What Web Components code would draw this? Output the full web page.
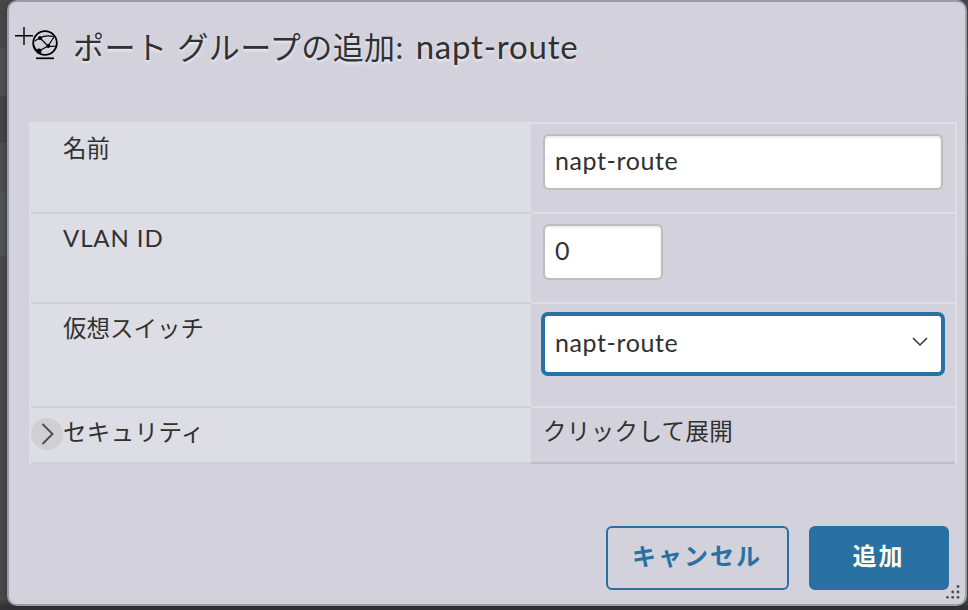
<!DOCTYPE html>
<html lang="ja">
<head>
<meta charset="utf-8">
<title>ポート グループの追加</title>
<style>
  body {
    --panel: #d2d1dc;
    --label-cell: #dddde5;
    --line: #dddce7;
    --blue: #2871a2;
    margin: 0;
    height: 610px;
    overflow: hidden;
    box-sizing: border-box;
    padding: 0 1px 4px 7px;
    color: #313131;
    font-family: Lato, "Noto Sans CJK JP", sans-serif;
    background: linear-gradient(#47474a 0 48px, #4e4f52 48px 96px, #434447 96px 143px, #4b4c4f 143px 192px, #515256 192px 256px, #47484b 256px 600px, #333336 606px);
  }
</style>
</head>
<body>
<port-dialog>
  <dialog-title slot="title">ポート グループの追加: <span>napt-route</span></dialog-title>
  <form-row height="90" pad="10"><span slot="label">名前</span><text-field value="napt-route" width="400"></text-field></form-row>
  <form-row height="90" pad="10"><span slot="label" class="latin">VLAN ID</span><text-field value="0" width="120"></text-field></form-row>
  <form-row height="104" pad="8"><span slot="label">仮想スイッチ</span><select-field value="napt-route"></select-field></form-row>
  <form-row height="56" pad="11" expandable><span slot="label">セキュリティ</span><span>クリックして展開</span></form-row>
  <action-button slot="actions">キャンセル</action-button>
  <action-button slot="actions" primary>追加</action-button>
</port-dialog>

<script>
class PortDialog extends HTMLElement {
  connectedCallback() {
    this.attachShadow({ mode: "open" }).innerHTML = `
      <style>
        :host {
          position: relative;
          display: flex;
          flex-direction: column;
          height: 606px;
          box-sizing: border-box;
          border: 2px solid #9c9ca5;
          border-radius: 10px;
          background: var(--panel);
          box-shadow: 0 0 5px #2228;
        }
        main {
          margin: 0 8px 0 20px;
          border: 2px solid var(--line);
          border-bottom: 0;
        }
        footer {
          display: flex;
          justify-content: flex-end;
          gap: 20px;
          padding: 62px 16px 0 0;
        }
        .grip {
          position: absolute;
          right: 5px;
          bottom: 5px;
        }
      </style>
      <slot name="title"></slot>
      <main><slot></slot></main>
      <footer><slot name="actions"></slot></footer>
      <svg class="grip" width="15" height="15" viewBox="0 0 15 15" fill="#4c4c55">
        <circle cx="13" cy="2.5" r="1.4"/>
        <circle cx="7.7" cy="8" r="1.4"/><circle cx="13" cy="8" r="1.4"/>
        <circle cx="2.4" cy="13.3" r="1.4"/><circle cx="7.7" cy="13.3" r="1.4"/><circle cx="13" cy="13.3" r="1.4"/>
      </svg>`;
  }
}

class DialogTitle extends HTMLElement {
  connectedCallback() {
    this.attachShadow({ mode: "open" }).innerHTML = `
      <style>
        :host {
          display: flex;
          align-items: flex-start;
          height: 120px;
          box-sizing: border-box;
          padding: 23px 0 0 5px;
          flex: none;
        }
        svg { flex: none; }
        h1 {
          margin: -1px 0 0 13px;
          font-size: 31px;
          line-height: 44px;
          letter-spacing: .45px;
          word-spacing: 1.5px;
          font-weight: 400;
          white-space: nowrap;
          text-shadow: 0 2px 3px #ececf6;
        }
        ::slotted(span) { margin-left: 2px; font-size: 33px; letter-spacing: .8px; }
      </style>
      <svg width="46" height="38" viewBox="14 25 46 38" fill="none" stroke="#000">
        <path d="M15 35.7h18M24 27v18" stroke-width="1.4"/>
        <circle cx="45" cy="43" r="11.8" stroke-width="1.8"/>
        <path d="M34.5 41L40 38c4-2.500 9-2.500 13.500-1.500M40 38l8 8M54 37l-6 9-9 5M48 46c3 .6 6 .4 8.500 0M34 45.500c.5 2.500 2 4.500 5 5.500" stroke-width="1.2"/>
        <circle cx="40" cy="38" r="1.9" fill="#000" stroke="none"/>
        <circle cx="48.300" cy="46" r="1.9" fill="#000" stroke="none"/>
        <circle cx="39" cy="51" r="2.5" fill="#000" stroke="none"/>
        <path d="M36 58.3h18" stroke-width="1.7"/>
      </svg>
      <h1><slot></slot></h1>`;
  }
}

class FormRow extends HTMLElement {
  connectedCallback() {
    const icon = this.hasAttribute("expandable")
      ? `<svg width="32" height="32" viewBox="0 0 32 32"><circle cx="16" cy="16" r="16" fill="#d0d0d3"/><path d="M11.500 6L21.500 16 11.500 26" fill="none" stroke="#4a4a4c" stroke-width="1.8"/></svg>`
      : "";
    this.attachShadow({ mode: "open" }).innerHTML = `
      <style>
        :host {
          display: grid;
          grid-template-columns: 500px 1fr;
          height: ${this.getAttribute("height")}px;
          font-size: 23.5px;
          line-height: 24px;
        }
        div { box-sizing: border-box; }
        .label {
          display: grid;
          grid-template-columns: 32px 1fr;
          padding-top: 12px;
          background: var(--label-cell);
          border-bottom: 2px solid #d1d1d5;
        }
        .icon { height: 24px; margin-top: -2px; }
        .value {
          padding: ${this.getAttribute("pad")}px 12px 0;
          border-bottom: 2px solid ${icon ? "#bdbdc9" : "var(--line)"};
        }
        :host([expandable]) { letter-spacing: .35px; }
        ::slotted(.latin) { font-size: 24px; letter-spacing: .9px; }
        svg { display: block; }
      </style>
      <div class="label"><div class="icon">${icon}</div><slot name="label"></slot></div>
      <div class="value"><slot></slot></div>`;
  }
}

class TextField extends HTMLElement {
  connectedCallback() {
    this.attachShadow({ mode: "open" }).innerHTML = `
      <style>
        :host { display: block; }
        input {
          display: block;
          width: ${this.getAttribute("width")}px;
          height: 56px;
          box-sizing: border-box;
          padding: 0 10px 5px;
          border: 2px solid #bdbdbd;
          border-radius: 6px;
          outline: 0;
          background: #fff;
          box-shadow: inset 0 2px 2px #eee;
          color: #313131;
          font: 25px Lato, sans-serif;
          letter-spacing: .6px;
        }
      </style>
      <input type="text" value="${this.getAttribute("value")}">`;
  }
}

class SelectField extends HTMLElement {
  connectedCallback() {
    this.attachShadow({ mode: "open" }).innerHTML = `
      <style>
        :host {
          display: flex;
          align-items: center;
          justify-content: space-between;
          width: 404px;
          height: 64px;
          box-sizing: border-box;
          margin-left: -2px;
          padding: 0 13px 5px 10px;
          border: 4px solid var(--blue);
          border-radius: 7px;
          background: #fff;
          font-size: 25px;
          letter-spacing: .6px;
        }
      </style>
      <span>${this.getAttribute("value")}</span>
      <svg width="16" height="10" viewBox="0 0 16 10" fill="none" stroke="#313131" stroke-width="1.5"><path d="M1 1l7 7 7-7"/></svg>`;
  }
}

class ActionButton extends HTMLElement {
  connectedCallback() {
    const primary = this.hasAttribute("primary");
    this.attachShadow({ mode: "open" }).innerHTML = `
      <style>
        :host { display: block; }
        button {
          width: ${primary ? 140 : 183}px;
          height: 64px;
          padding: 0 1px 7px 0;
          border: 2px solid var(--blue);
          border-radius: 6px;
          background: ${primary ? "var(--blue)" : "transparent"};
          color: ${primary ? "#fffdec" : "var(--blue)"};
          font: 700 24px "Noto Sans CJK JP", sans-serif;
          letter-spacing: 2px;
          white-space: nowrap;
        }
      </style>
      <button><slot></slot></button>`;
  }
}

customElements.define("port-dialog", PortDialog);
customElements.define("dialog-title", DialogTitle);
customElements.define("form-row", FormRow);
customElements.define("text-field", TextField);
customElements.define("select-field", SelectField);
customElements.define("action-button", ActionButton);
</script>
</body>
</html>
